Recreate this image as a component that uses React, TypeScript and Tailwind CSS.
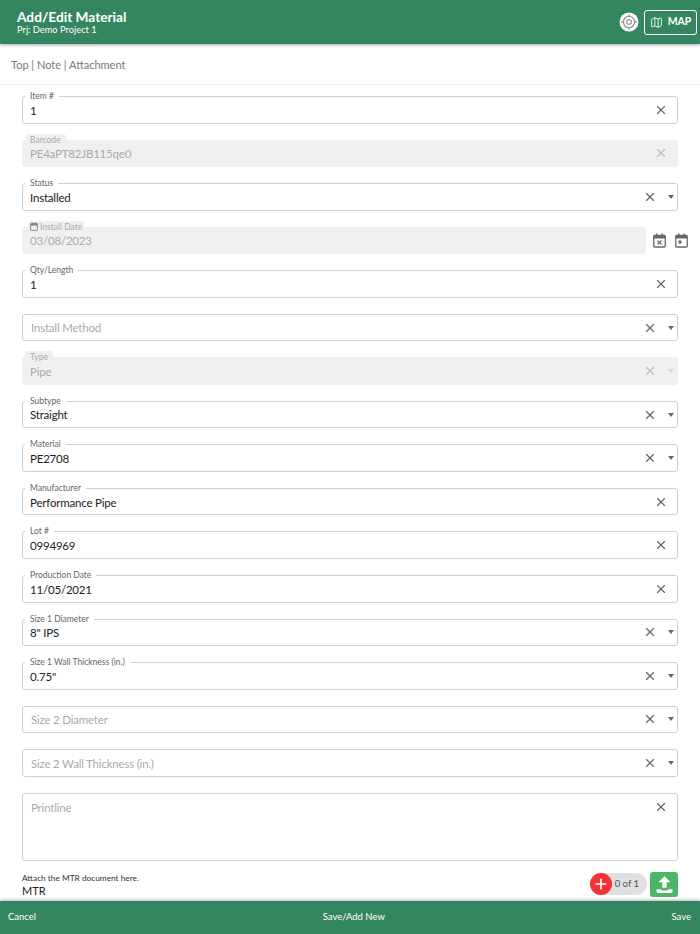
import { X, Map as MapIcon, Plus } from "lucide-react"

const font = "font-['Lato','Open_Sans',sans-serif]"

function Caret({ faded }: { faded?: boolean }) {
  return (
    <span
      className={`ml-[11px] h-0 w-0 border-x-[3px] border-t-[4px] border-x-transparent ${
        faded ? "border-t-[#d4d4d4]" : "border-t-[#666]"
      }`}
    />
  )
}

function CalendarIcon({ cross }: { cross?: boolean }) {
  return (
    <svg width="13" height="15" viewBox="0 0 13 15" fill="none" className="shrink-0">
      <rect x="0.75" y="2.5" width="11.5" height="11.5" rx="1" stroke="#666" strokeWidth="1.3" />
      <rect x="0.75" y="2.5" width="11.5" height="3" fill="#666" />
      <rect x="3" y="0.5" width="1.5" height="3" fill="#666" />
      <rect x="8.5" y="0.5" width="1.5" height="3" fill="#666" />
      {cross ? (
        <path d="M4.5 7.5l4 4M8.5 7.5l-4 4" stroke="#666" strokeWidth="1.2" />
      ) : (
        <rect x="3.5" y="7.5" width="3" height="3" fill="#666" />
      )}
    </svg>
  )
}

type FieldProps = {
  label: string
  value?: string
  select?: boolean
  disabled?: boolean
  date?: boolean
}

function Field({ label, value, select, disabled, date }: FieldProps) {
  const hasValue = !!value
  return (
    <div
      className={`relative flex h-[27.55px] min-w-0 items-center rounded-[3px] border pl-[7px] ${
        disabled ? "border-[#f0f0f0] bg-[#f0f0f0]" : "border-[#cfcfcf] bg-white"
      } ${date ? "flex-1 pr-0" : select ? "w-full shrink-0 pr-[3px]" : "w-full shrink-0 pr-[9px]"}`}
    >
      {hasValue && (
        <span
          className={`absolute top-[-7px] flex h-[12px] items-center gap-[2px] rounded-[3px] text-[8.5px] leading-[12px] ${
            disabled ? "bg-[#f0f0f0] text-[#aaa]" : "bg-white text-[#666]"
          } ${date ? "left-[5px] px-[2px]" : "left-[2px] px-[5px]"}`}
        >
          {date && (
            <svg width="8" height="9" viewBox="0 0 13 15" fill="none">
              <rect x="0.75" y="2.5" width="11.5" height="11.5" rx="1" stroke="#888" strokeWidth="1.6" />
              <rect x="0.75" y="2.5" width="11.5" height="3.5" fill="#888" />
              <rect x="3" y="0.5" width="1.5" height="3" fill="#888" />
              <rect x="8.5" y="0.5" width="1.5" height="3" fill="#888" />
            </svg>
          )}
          {label}
        </span>
      )}
      <span
        className={`min-w-0 flex-1 truncate pt-px text-[11.5px] tracking-[-0.2px] ${
          !hasValue ? "pl-px text-[#aaa]" : disabled ? "text-[#aaa]" : "text-[#222]"
        }`}
      >
        {value || label}
      </span>
      {!date && (
        <X size={14} strokeWidth={2} className={`shrink-0 ${disabled ? "text-[#bbb]" : "text-[#666]"}`} />
      )}
      {select && <Caret faded={disabled} />}
    </div>
  )
}

const fieldsAfterQty: FieldProps[] = [
  { label: "Install Method", select: true },
  { label: "Type", value: "Pipe", select: true, disabled: true },
  { label: "Subtype", value: "Straight", select: true },
  { label: "Material", value: "PE2708", select: true },
  { label: "Manufacturer", value: "Performance Pipe" },
  { label: "Lot #", value: "0994969" },
  { label: "Production Date", value: "11/05/2021" },
  { label: 'Size 1 Diameter', value: '8" IPS', select: true },
  { label: "Size 1 Wall Thickness (in.)", value: '0.75"', select: true },
  { label: "Size 2 Diameter", select: true },
  { label: "Size 2 Wall Thickness (in.)", select: true },
]

export default function App() {
  return (
    <div className={`flex h-[934px] w-[700px] flex-col overflow-hidden bg-white ${font}`}>
      <header className="relative z-10 flex h-[44px] shrink-0 items-center justify-between bg-[#348661] pl-[17px] pr-[3px] shadow-[0_1px_3px_rgba(0,0,0,0.35)]">
        <div className="text-white">
          <div className="text-[13.7px] font-bold leading-[14px]">Add/Edit Material</div>
          <div className="text-[9.3px] leading-[11px]">Prj: Demo Project 1</div>
        </div>
        <div className="flex items-center gap-[5px]">
          <svg width="20" height="20" viewBox="0 0 20 20" fill="none">
            <circle cx="10" cy="10" r="9.5" fill="#fff" />
            <circle cx="10" cy="10" r="5.6" stroke="#999" strokeWidth="1.4" />
            <circle cx="10" cy="10" r="2.4" stroke="#999" strokeWidth="1.2" />
            <path d="M10 2.2v2.5M10 15.3v2.5M2.2 10h2.5M15.3 10h2.5" stroke="#999" strokeWidth="1.3" />
          </svg>
          <div className="flex h-[25px] w-[53px] items-center justify-center gap-[5px] rounded-[3px] border border-white text-[10.5px] font-bold text-white">
            <MapIcon size={13} strokeWidth={1.6} />
            MAP
          </div>
        </div>
      </header>

      <nav className="flex h-[41px] shrink-0 items-center border-b border-[#f2f2f2] pl-[11px] pt-[2px] text-[11px] text-[#777]">
        Top | Note | Attachment
      </nav>

      <main className="min-h-0 flex-1 overflow-hidden px-[22px] pt-[11px]">
        <div className="flex flex-col gap-y-4">
          <Field label="Item #" value="1" />
          <Field label="Barcode" value="PE4aPT82JB115qe0" disabled />
          <Field label="Status" value="Installed" select />
          <div className="mr-[-10px] flex shrink-0 items-center">
            <Field label="Install Date" value="03/08/2023" disabled date />
            <div className="flex w-[42px] shrink-0 justify-end gap-[9px]">
              <CalendarIcon cross />
              <CalendarIcon />
            </div>
          </div>
          <Field label="Qty/Length" value="1" />
          {fieldsAfterQty.map((f) => (
            <Field key={f.label} {...f} />
          ))}
          <div className="relative flex h-[68px] shrink-0 items-start justify-between rounded-[3px] border border-[#cfcfcf] pl-[8px] pr-[9px] pt-[5px]">
            <span className="text-[11.5px] tracking-[-0.2px] text-[#aaa]">Printline</span>
            <X size={14} strokeWidth={2} className="mt-[1px] text-[#666]" />
          </div>
        </div>

        <div className="mt-[11px] flex items-start justify-between">
          <div>
            <div className="text-[8.3px] leading-[12px] text-[#333]">Attach the MTR document here.</div>
            <div className="text-[11px] leading-[13px] text-[#222]">MTR</div>
          </div>
          <div className="flex items-center gap-[3px]">
            <div className="flex h-[22px] items-center rounded-full bg-[#e0e0e0] pr-[8px]">
              <span className="flex h-[22px] w-[22px] items-center justify-center rounded-full bg-[#f73131] text-white">
                <Plus size={16} strokeWidth={2.6} />
              </span>
              <span className="pl-[3px] text-[9.5px] text-[#555]">0 of 1</span>
            </div>
            <div className="flex h-[25px] w-[28px] items-center justify-center rounded-[3px] bg-[#4cb568]">
              <svg width="19" height="19" viewBox="0 0 19 19" fill="none">
                <path d="M9.5 1.5L4 7h3.6v5.6h3.8V7H15z" fill="#fff" stroke="#fff" strokeWidth="0.6" strokeLinejoin="round" />
                <path d="M1.5 14.2h4.2c.6 1 1.5 1.2 2.3 1.2h3c.8 0 1.700-.2 2.300-1.200h4.200v2.300c0 .8-.6 1.400-1.400 1.400H2.900c-.8 0-1.400-.6-1.400-1.400z" fill="#fff" />
              </svg>
            </div>
          </div>
        </div>
      </main>

      <footer className="relative z-10 flex h-[33px] shrink-0 items-center justify-between bg-[#348661] pl-[8px] pr-[9px] text-[9.5px] text-white shadow-[0_-1px_3px_rgba(0,0,0,0.3)]">
        <span>Cancel</span>
        <span>Save/Add New</span>
        <span>Save</span>
      </footer>
    </div>
  )
}
